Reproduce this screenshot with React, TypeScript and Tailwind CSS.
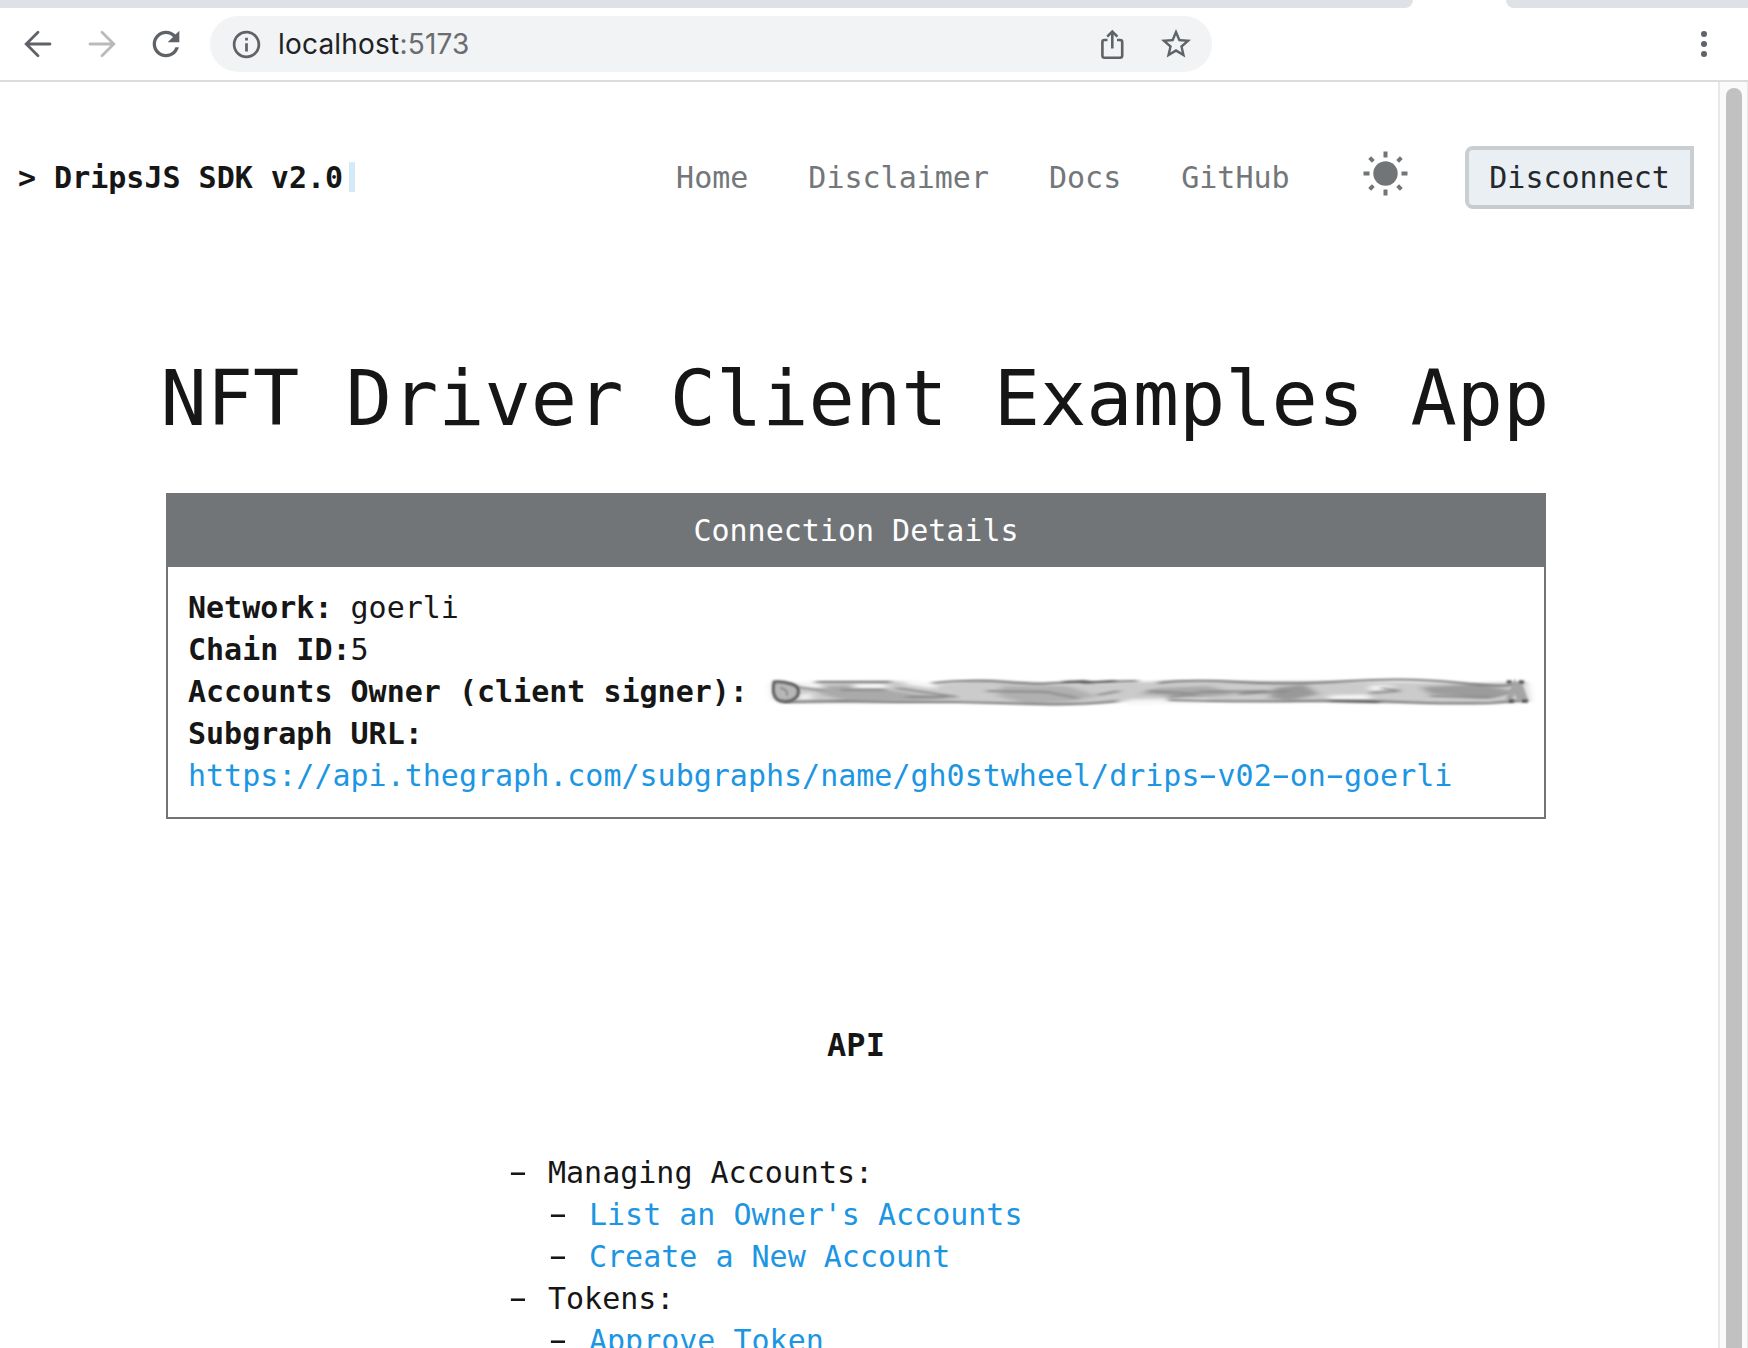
import { Fragment } from "react";
import { MdInfoOutline, MdRefresh, MdStarBorder } from "react-icons/md";

const SUBGRAPH_URL = "https://api.thegraph.com/subgraphs/name/gh0stwheel/drips-v02-on-goerli";

function WideDash() {
  return <span className="inline-block origin-[50%_62%] scale-x-[1.85] scale-y-[1.05]">-</span>;
}

function DashedText({ text }: { text: string }) {
  const parts = text.split("-");
  return (
    <>
      {parts.map((part, i) => (
        <Fragment key={i}>
          {i > 0 && <WideDash />}
          {part}
        </Fragment>
      ))}
    </>
  );
}

function Arrow({ className }: { className: string }) {
  return (
    <svg viewBox="0 0 28 28" className={"size-7 " + className} fill="none" stroke="currentColor" strokeWidth="2.8" strokeLinecap="round">
      <path d="M26 14H2.4M14 2.2L2.2 14L14 25.8" />
    </svg>
  );
}

function BrowserBar() {
  return (
    <div className="h-[82px] shrink-0 border-b-2 border-[#dcdcdc] bg-white">
      <div className="flex h-2 justify-between">
        <div className="w-[1413px] rounded-br-[16px] bg-[#dee1e6]" />
        <div className="w-[242px] rounded-bl-[16px] bg-[#dee1e6]" />
      </div>
      <div className="flex h-[72px] items-center text-[#5f6368]">
        <Arrow className="ml-6 -mt-px" />
        <Arrow className="ml-9 -mt-px rotate-180 text-[#bababa]" />
        <MdRefresh className="ml-[30px] size-10" />
        <div className="ml-6 flex h-14 w-[1002px] items-center rounded-full bg-[#f1f3f4]">
          <MdInfoOutline className="ml-5 size-[33px]" />
          <div className="ml-[15px] flex-1 font-['Inter',sans-serif] text-[28px] tracking-[0.2px] text-[#202124]">
            localhost<span className="text-[#6a6c6f]">:5173</span>
          </div>
          <svg viewBox="0 0 24 32" className="mr-[34px] h-8 w-6" fill="none" stroke="currentColor" strokeWidth="2.6">
            <path d="M7.5 12H4.5Q2.4 12 2.4 14V27.5Q2.4 29.8 4.5 29.8H20Q22.2 29.8 22.2 27.5V14Q22.2 12 20 12H17" />
            <path d="M12.3 20.5V4.2M7.2 8.6L12.3 3.5L17.4 8.6" />
          </svg>
          <MdStarBorder className="mr-[18px] size-9" />
        </div>
        <div className="ml-auto mr-[41px] flex flex-col gap-1">
          <span className="size-1.5 rounded-full bg-[#5f6368]" />
          <span className="size-1.5 rounded-full bg-[#5f6368]" />
          <span className="size-1.5 rounded-full bg-[#5f6368]" />
        </div>
      </div>
    </div>
  );
}

function Sun() {
  return (
    <svg viewBox="-22.5 -22.5 45 45" className="-mt-[9px] ml-[73px] size-[45px]" fill="#717578">
      <circle r="12.2" />
      {[0, 45, 90, 135, 180, 225, 270, 315].map((angle) => (
        <rect key={angle} x="-2" y={angle % 90 ? -22.4 : -22} width="4" height={angle % 90 ? 5.2 : 6} transform={`rotate(${angle})`} />
      ))}
    </svg>
  );
}

function Header() {
  return (
    <header className="mt-16 flex h-[63px] items-center pl-[18px]">
      <strong className="whitespace-pre">&gt; DripsJS SDK v2.0</strong>
      <span className="-mt-px ml-[6px] h-[30px] w-1.5 bg-[#d5eaf8]" />
      <nav className="ml-[321px] flex gap-[60px] text-[#73777a]">
        <a>Home</a>
        <a>Disclaimer</a>
        <a>Docs</a>
        <a>GitHub</a>
      </nav>
      <Sun />
      <button className="ml-[57px] h-[63px] w-[229px] rounded-l-lg border-4 border-[#c9ced3] border-b-[#c7cbd0] bg-[#eaeff4] pl-px text-[#24282c]">
        Disconnect
      </button>
    </header>
  );
}

/** Smeared-over wallet address. */
function RedactedAddress() {
  return (
    <svg viewBox="0 0 770 36" preserveAspectRatio="none" className="-ml-px h-9 w-[776px] shrink-0" fill="none">
      <defs>
        <filter id="soft" x="-5%" y="-40%" width="110%" height="180%">
          <feGaussianBlur stdDeviation="4 1.4" />
        </filter>
        <filter id="crisp" x="-5%" y="-40%" width="110%" height="180%">
          <feGaussianBlur stdDeviation="3 0.8" />
        </filter>
        <filter id="edge" x="-5%" y="-40%" width="110%" height="180%">
          <feGaussianBlur stdDeviation="0.9" />
        </filter>
      </defs>
      <g filter="url(#soft)">
        <path d="M8 8L24 9L58 14L52 8L130 7L170 10L215 6L300 10L400 7L520 7L640 8L700 9L755 8L758 28L700 30L560 28L440 27L370 27L330 29L290 31L200 28L60 29L24 29L10 26Z" fill="#cbcbcb" />
        <path d="M60 12L90 11L150 20L190 24L150 27L80 27L55 20Z" fill="#aaaaaa" />
        <path d="M235 12L300 12L330 22L300 28L260 30L230 22Z" fill="#b0b0b0" />
        <path d="M390 14L440 12L470 20L430 24L370 20Z" fill="#a9a9a9" />
        <path d="M505 14L535 10L550 20L520 27L500 24Z" fill="#999" />
        <path d="M650 13L710 10L742 17L715 25L660 20Z" fill="#9c9c9c" />
        <path d="M88 12L120 12M140 8L170 12M600 14L622 14M560 24L600 23M360 28L440 27" stroke="#f6f6f6" strokeWidth="5" />
        <path d="M34 10L50 12M34 24L46 22" stroke="#f2f2f2" strokeWidth="6" />
      </g>
      <g filter="url(#crisp)" stroke="#777" strokeWidth="2">
        <path d="M50 8L80 8L125 8M166 9Q205 5 240 8T285 9L370 7M390 9Q420 5 470 8T580 7T690 9T752 8" />
        <path d="M18 28L75 27L130 28L190 28Q240 29 275 30T350 27M400 26Q470 28 530 27T630 28T720 29L755 26" />
        <path d="M30 13L60 17M75 16L120 16M130 14L190 23M220 17L280 18L310 24M330 21L352 17M380 17L430 20L400 23M430 18L500 17M470 20L520 17M600 19L630 17L612 14M660 22L720 23L745 17M140 23L180 23" stroke="#8b8b8b" />
        <path d="M295 8L320 7M315 9L348 7M560 27L610 28" stroke="#4d4d4d" />
      </g>
      <g filter="url(#edge)">
        <path d="M9 8Q6 25 16 27T32 22Q36 13 26 10T9 8Z" fill="#b7b7b7" stroke="#5a5a5a" strokeWidth="3" />
        <path d="M15 14Q23 15 22 22" stroke="#888" strokeWidth="2" />
        <path d="M738 26L744 12L750 26M748 10L754 26" stroke="#a5a5a5" strokeWidth="6" />
        <path d="M736 8H741M748 8H753M738 27H743M751 27H757" stroke="#4a4a4a" strokeWidth="3" />
      </g>
    </svg>
  );
}

function ConnectionDetails() {
  return (
    <section className="mx-auto w-[1380px] border-2 border-[#717578] leading-[42px]">
      <h2 className="h-[72px] bg-[#717578] pt-[15px] text-center text-white">Connection Details</h2>
      <div className="px-5 py-5">
        <p>
          <strong>Network:</strong> goerli
        </p>
        <p>
          <strong>Chain ID:</strong>5
        </p>
        <p className="flex items-center whitespace-pre">
          <strong>Accounts Owner (client signer): </strong>
          <RedactedAddress />
        </p>
        <p>
          <strong>Subgraph URL:</strong>
        </p>
        <p>
          <a className="whitespace-nowrap text-[#1c96e2]">
            <DashedText text={SUBGRAPH_URL} />
          </a>
        </p>
      </div>
    </section>
  );
}

const API_GROUPS = [
  { title: "Managing Accounts:", links: ["List an Owner's Accounts", "Create a New Account"] },
  { title: "Tokens:", links: ["Approve Token"] },
];

function ApiList() {
  return (
    <ul className="ml-[509px] mt-[86px] leading-[42px]">
      {API_GROUPS.map((group) => (
        <li key={group.title}>
          <div className="flex">
            <span className="w-[39px]">
              <WideDash />
            </span>
            {group.title}
          </div>
          <ul className="pl-10">
            {group.links.map((link) => (
              <li key={link} className="flex">
                <span className="w-[40px]">
                  <WideDash />
                </span>
                <a className="text-[#1c96e2]">{link}</a>
              </li>
            ))}
          </ul>
        </li>
      ))}
    </ul>
  );
}

export default function App() {
  return (
    <div className="flex h-[1348px] w-[1748px] flex-col overflow-hidden bg-white">
      <BrowserBar />
      <div className="flex min-h-0 flex-1">
        <main className="w-[1718px] shrink-0 overflow-hidden font-['DejaVu_Sans_Mono',monospace] text-[30px] leading-[42px] text-[#161616]">
          <Header />
          <h1 className="mt-[145px] h-[139px] whitespace-nowrap pl-[160.5px] text-[76.9px] leading-[90px]">NFT Driver Client Examples App</h1>
          <div className="pl-[166px]">
            <div className="w-[1380px]">
              <ConnectionDetails />
              <h3 className="mt-[205px] text-center text-[32px] font-bold leading-[42px]">API</h3>
            </div>
          </div>
          <ApiList />
        </main>
        <div className="flex flex-1 justify-center border-l-2 border-r border-[#e8e8e8] bg-[#fafafa] pt-1.5">
          <div className="h-[1400px] w-4 rounded-full bg-[#c1c1c1]" />
        </div>
      </div>
    </div>
  );
}
